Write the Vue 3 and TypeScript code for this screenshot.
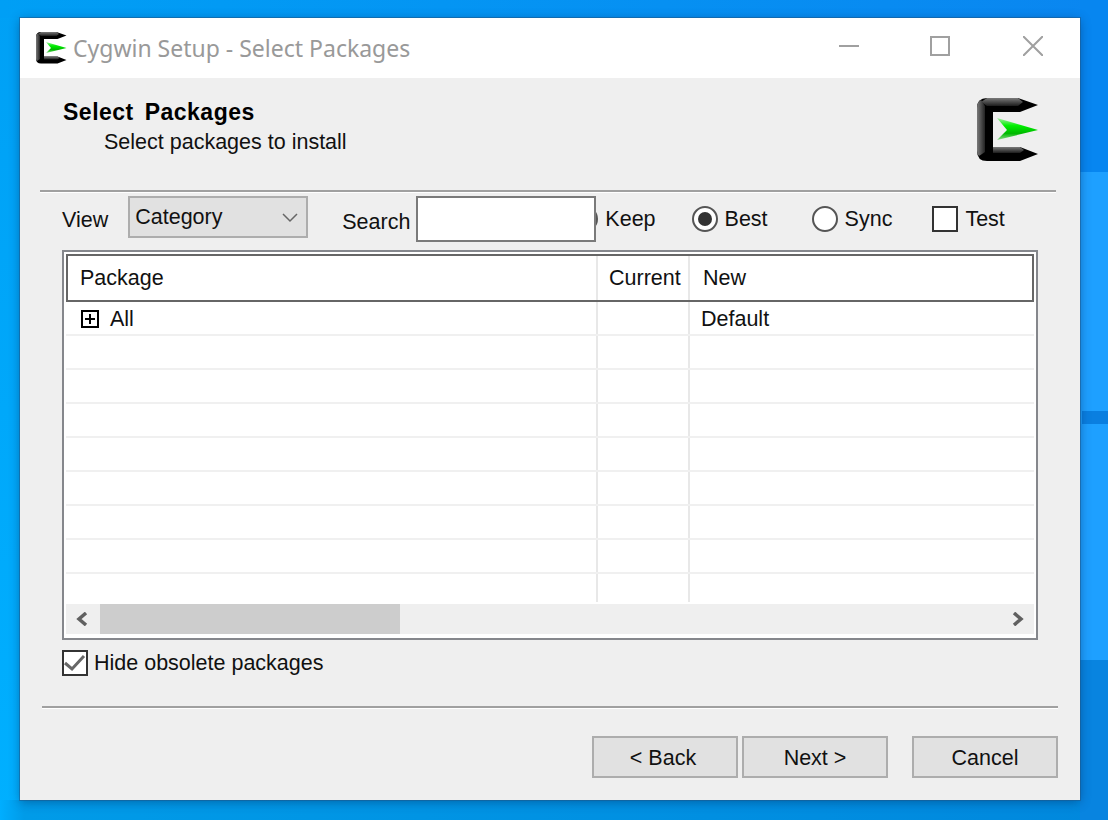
<template>
  <div class="desktop">
    <svg class="defs" width="0" height="0">
      <defs>
        <linearGradient id="cTop" x1="0" y1="0" x2="0" y2="1">
          <stop offset="0" stop-color="#7a7a7a" />
          <stop offset="1" stop-color="#1c1c1c" />
        </linearGradient>
        <linearGradient id="cLeft" x1="0" y1="0" x2="1" y2="0">
          <stop offset="0" stop-color="#7a7a7a" />
          <stop offset="1" stop-color="#222" />
        </linearGradient>
        <linearGradient id="arrow" x1="0" y1="0" x2="0" y2="1">
          <stop offset="0" stop-color="#a8eea8" />
          <stop offset="0.35" stop-color="#00f000" />
          <stop offset="0.7" stop-color="#00b800" />
          <stop offset="1" stop-color="#8adc8a" />
        </linearGradient>
        <symbol id="cygwin" viewBox="0 0 62 64">
          <path d="M10 0H41L61 7L43 14H16V49H43L61 56L43 63H10Q0 63 0 53V10Q0 0 10 0Z" fill="#000" />
          <path d="M10 0H41L46 4L41 8H10L4 4Z" fill="url(#cTop)" />
          <path d="M0 10Q0 4 4 2L8 8V54L2 58Q0 56 0 53Z" fill="url(#cLeft)" />
          <path d="M16 49H43L47 52L43 55H16Z" fill="url(#cTop)" />
          <path d="M20 20L61 32L20 42L30 32Z" fill="url(#arrow)" />
        </symbol>
      </defs>
    </svg>

    <div class="window">
      <div class="titlebar">
        <svg class="title-icon"><use href="#cygwin" /></svg>
        <span class="title-text">Cygwin Setup - Select Packages</span>
        <div class="caption-buttons">
          <svg class="min" width="20" height="20" viewBox="0 0 20 20"><path d="M0 10H20" stroke="#a0a0a0" stroke-width="2" /></svg>
          <svg width="20" height="20" viewBox="0 0 20 20"><rect x="1" y="1" width="18" height="18" fill="none" stroke="#a0a0a0" stroke-width="2" /></svg>
          <svg width="20" height="20" viewBox="0 0 20 20"><path d="M0 0L20 20M20 0L0 20" stroke="#a0a0a0" stroke-width="2" /></svg>
        </div>
      </div>

      <div class="body">
        <div class="heading">
          <div class="heading-text">
            <h1>Select Packages</h1>
            <p>Select packages to install</p>
          </div>
          <svg class="heading-logo"><use href="#cygwin" /></svg>
        </div>
        <div class="rule rule-top"></div>

        <div class="toolbar">
          <span class="view-label">View</span>
          <div class="select">
            <span>Category</span>
            <svg width="16" height="10" viewBox="0 0 16 10"><path d="M1 1L8 8L15 1" fill="none" stroke="#666" stroke-width="1.5" /></svg>
          </div>
          <span class="search-label">Search</span>
          <div class="search"></div>
          <label class="option keep"><span class="radio"></span>Keep</label>
          <label class="option best"><span class="radio on"></span>Best</label>
          <label class="option sync"><span class="radio"></span>Sync</label>
          <label class="option test"><span class="check"></span>Test</label>
        </div>

        <div class="list">
          <div class="list-head">
            <div class="col-pkg">Package</div>
            <div class="col-cur">Current</div>
            <div class="col-new">New</div>
          </div>
          <div v-for="(row, i) in rows" :key="i" class="row">
            <div class="col-pkg">
              <template v-if="row.name">
                <svg class="expander" width="18" height="18" viewBox="0 0 18 18">
                  <rect x="1" y="1" width="16" height="16" fill="#fff" stroke="#000" stroke-width="2" />
                  <path d="M4 9H14M9 4V14" stroke="#000" stroke-width="2" />
                </svg>
                <span>{{ row.name }}</span>
              </template>
            </div>
            <div class="col-cur"></div>
            <div class="col-new">{{ row.value }}</div>
          </div>
          <div class="row-tail">
            <div class="col-pkg"></div>
            <div class="col-cur"></div>
            <div class="col-new"></div>
          </div>
          <div class="hscroll">
            <svg class="arrow-left" width="12" height="14" viewBox="0 0 12 14"><path d="M10 1L3 7L10 13" fill="none" stroke="#606060" stroke-width="3.5" /></svg>
            <div class="thumb"></div>
            <svg class="arrow-right" width="12" height="14" viewBox="0 0 12 14"><path d="M2 1L9 7L2 13" fill="none" stroke="#606060" stroke-width="3.5" /></svg>
          </div>
        </div>

        <label class="hide-obsolete">
          <span class="check checked">
            <svg width="22" height="22" viewBox="0 0 22 22"><path d="M1 11L8 17L20 4" fill="none" stroke="#666" stroke-width="3" /></svg>
          </span>
          Hide obsolete packages
        </label>

        <div class="rule rule-bottom"></div>

        <div class="actions">
          <button class="btn back">&lt; Back</button>
          <button class="btn next">Next &gt;</button>
          <button class="btn cancel">Cancel</button>
        </div>
      </div>
    </div>
  </div>
</template>

<script setup lang="ts">
interface Row {
  name: string;
  value: string;
}

const rows: Row[] = [
  { name: 'All', value: 'Default' },
  ...Array.from({ length: 7 }, () => ({ name: '', value: '' })),
];
</script>

<style>
body {
  margin: 0;
  overflow: hidden;
}
</style>

<style scoped>
.desktop {
  box-sizing: border-box;
  width: 1108px;
  height: 820px;
  padding: 18px 28px 20px 20px;
  font-family: "Liberation Sans", Arial, sans-serif;
  font-size: 21.5px;
  color: #111;
  background:
    linear-gradient(#0a7fe0, #0a7fe0) right 0 top 411px / 26px 13px no-repeat,
    linear-gradient(#0786f0 0 172px, #1ea0ff 172px 660px, #0884e0 660px 100%) right / 28px 100% no-repeat,
    linear-gradient(90deg, #00aeff 0, #009be8 24px, #0088dd 100%) bottom / 100% 20px no-repeat,
    linear-gradient(90deg, #009ff5, #0a86f0) top / 100% 18px no-repeat,
    linear-gradient(#00a0f5, #00b0ff);
}

.defs {
  position: absolute;
}

.window {
  display: flex;
  flex-direction: column;
  height: 782px;
  background: #efefef;
  box-shadow: 0 0 0 1px rgba(30, 90, 140, 0.55), 0 2px 10px rgba(0, 40, 90, 0.45);
}

.titlebar {
  display: flex;
  align-items: center;
  height: 60px;
  padding-left: 16px;
  background: #fff;
}

.title-icon {
  width: 31px;
  height: 32px;
  filter: blur(0.5px);
}

.title-text {
  margin-left: 6px;
  font-family: "Noto Sans", sans-serif;
  font-size: 23px;
  color: #999;
}

.caption-buttons {
  display: flex;
  gap: 73px;
  margin: 0 37px 4px auto;
}

.min {
  margin-right: -2px;
}

.body {
  display: flex;
  flex-direction: column;
  flex: 1;
}

.heading {
  display: flex;
  justify-content: space-between;
  height: 112px;
  padding: 20px 41px 0 43px;
  box-sizing: border-box;
}

.heading h1 {
  margin: 0;
  font-size: 23px;
  line-height: 28px;
  font-weight: 700;
  letter-spacing: 0.5px;
  word-spacing: 4px;
  color: #000;
}

.heading p {
  margin: 2px 0 0 41px;
  line-height: 28px;
}

.heading-logo {
  width: 62px;
  height: 64px;
  filter: blur(0.4px);
}

.rule {
  height: 2px;
  background: #a0a0a0;
  border-bottom: 1px solid #fff;
}

.rule-top {
  margin: 0 24px 0 20px;
}

.toolbar {
  display: flex;
  align-items: flex-start;
  height: 57px;
  padding: 3px 0 0 42px;
  box-sizing: border-box;
}

.view-label {
  margin-top: 12px;
}

.select {
  display: flex;
  align-items: center;
  justify-content: space-between;
  box-sizing: border-box;
  width: 180px;
  height: 42px;
  margin-left: 20px;
  padding: 1px 8px 0 5px;
  background: #e1e1e1;
  border: 2px solid #adadad;
}

.search-label {
  margin-left: 34px;
  margin-top: 14px;
}

.search {
  position: relative;
  z-index: 1;
  box-sizing: border-box;
  width: 180px;
  height: 46px;
  margin-left: 6px;
  background: #fff;
  border: 2px solid #7a7a7a;
}

.option {
  display: flex;
  align-items: center;
  gap: 7px;
  margin-top: 10px;
}

.keep {
  margin-left: -24px;
}

.best {
  margin-left: 36px;
}

.sync {
  margin-left: 44px;
}

.test {
  margin-left: 40px;
}

.radio {
  box-sizing: border-box;
  display: flex;
  align-items: center;
  justify-content: center;
  width: 26px;
  height: 26px;
  border: 2px solid #555;
  border-radius: 50%;
  background: #fff;
}

.radio.on::after {
  content: "";
  width: 14px;
  height: 14px;
  border-radius: 50%;
  background: #333;
}

.check {
  box-sizing: border-box;
  display: inline-flex;
  align-items: center;
  justify-content: center;
  flex: none;
  width: 26px;
  height: 26px;
  background: #fff;
  border: 2px solid #333;
}

.list {
  box-sizing: border-box;
  display: flex;
  flex-direction: column;
  height: 390px;
  margin: 0 42px;
  padding: 2px;
  background: #fff;
  border: 2px solid #85878c;
}

.list-head {
  display: flex;
  box-sizing: border-box;
  height: 48px;
  border: 2px solid #666;
  background: #fff;
}

.list-head > div {
  display: flex;
  align-items: center;
}

.col-pkg {
  box-sizing: border-box;
  width: 530px;
  padding-left: 12px;
}

.list-head .col-pkg {
  width: 528px;
}

.col-cur {
  box-sizing: border-box;
  width: 92px;
  padding-left: 11px;
  border-left: 2px solid #e8e8e8;
}

.col-new {
  box-sizing: border-box;
  flex: 1;
  padding-left: 13px;
  border-left: 2px solid #e8e8e8;
}

.row {
  display: flex;
  box-sizing: border-box;
  height: 34px;
  border-bottom: 2px solid #f0f0f0;
}

.row > div,
.row-tail > div {
  display: flex;
  align-items: center;
  padding-top: 3px;
}

.row-tail {
  display: flex;
  height: 28px;
}

.row .col-new {
  padding-left: 11px;
}

.expander {
  margin: -1px 11px 0 3px;
}

.hscroll {
  display: flex;
  align-items: center;
  height: 30px;
  margin-top: 2px;
  background: #efefef;
}

.arrow-left {
  margin-left: 10px;
}

.thumb {
  width: 300px;
  height: 30px;
  margin-left: 12px;
  background: #cdcdcd;
}

.arrow-right {
  margin-left: auto;
  margin-right: 10px;
}

.hide-obsolete {
  display: flex;
  align-items: center;
  gap: 6px;
  height: 26px;
  margin: 10px 0 0 42px;
}

.rule-bottom {
  margin: 30px 22px 0 22px;
}

.actions {
  display: flex;
  margin: 27px 22px 0 0;
  justify-content: flex-end;
}

.btn {
  box-sizing: border-box;
  width: 146px;
  height: 42px;
  padding: 2px 0 0;
  font: inherit;
  color: inherit;
  background: #e1e1e1;
  border: 2px solid #adadad;
}

.back {
  padding-right: 4px;
}

.next {
  margin-left: 4px;
}

.cancel {
  margin-left: 24px;
}
</style>
